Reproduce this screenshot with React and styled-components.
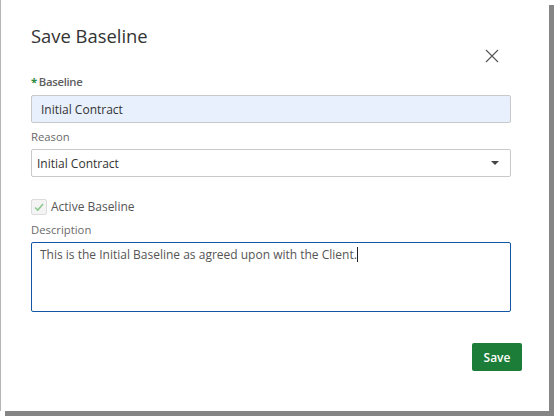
import React from 'react';
import styled, { createGlobalStyle } from 'styled-components';

const GlobalStyle = createGlobalStyle`
  html, body {
    margin: 0;
    padding: 0;
    background: #ffffff;
    font-family: "Open Sans", "Noto Sans", sans-serif;
  }
`;

const Page = styled.div`
  width: 554px;
  height: 416px;
  overflow: hidden;
`;

const Dialog = styled.div`
  box-sizing: border-box;
  width: 549px;
  height: 411px;
  background: #fff;
  border-left: 1px solid #b5b5b5;
  box-shadow: 5px 5px 0 #858585;
  padding: 22px 30px 0 30px;
  position: relative;
`;

const Title = styled.h2`
  margin: 0;
  font-size: 18.4px;
  font-weight: 400;
  color: #333;
  line-height: 28px;
`;

const CloseButton = styled.button`
  position: absolute;
  top: 48px;
  right: 49px;
  width: 16px;
  height: 16px;
  padding: 0;
  border: 0;
  background: none;
  cursor: pointer;
  display: flex;
`;

const Form = styled.div`
  margin-top: 24px;
  display: flex;
  flex-direction: column;
  width: 480px;
`;

const Label = styled.label`
  display: block;
  font-size: 11.3px;
  color: ${(p) => (p.$strong ? '#5e5e5e' : '#6a6a6a')};
  font-weight: ${(p) => (p.$strong ? 600 : 400)};
  line-height: 16px;
  margin-bottom: ${(p) => p.$gap || 5}px;
  letter-spacing: ${(p) => (p.$strong ? '-0.3px' : '0')};
`;

const Required = styled.span`
  color: #2b8a3e;
  font-weight: 700;
  margin-right: 2px;
`;

const Input = styled.div`
  box-sizing: border-box;
  height: 28px;
  border: 1px solid #c9c9c9;
  border-radius: 2px;
  background: ${(p) => p.$bg || '#fff'};
  font-size: 12px;
  color: #333;
  padding: 0 ${(p) => p.$pad || 8}px;
  display: flex;
  align-items: center;
  justify-content: space-between;
  margin-bottom: ${(p) => p.$mb || 0}px;
`;

const Caret = styled.span`
  width: 0;
  height: 0;
  border-left: 4px solid transparent;
  border-right: 4px solid transparent;
  border-top: 4px solid #444;
  margin-right: 6px;
`;

const CheckRow = styled.div`
  display: flex;
  align-items: center;
  gap: 4px;
  margin-top: 21px;
  margin-bottom: 7px;
  font-size: 12px;
  color: #555;
`;

const CheckBox = styled.span`
  box-sizing: border-box;
  width: 16px;
  height: 16px;
  border: 1px solid #dcdcdc;
  border-radius: 2px;
  background: #f4f4f4;
  display: flex;
  align-items: center;
  justify-content: center;
`;

const TextArea = styled.div`
  box-sizing: border-box;
  height: 70px;
  border: 1px solid #1257a6;
  border-radius: 2px;
  font-size: 12px;
  color: #555;
  padding: 3px 8px;
  line-height: 18px;
`;

const Cursor = styled.span`
  display: inline-block;
  width: 1px;
  height: 15px;
  background: #222;
  vertical-align: -3px;
`;

const Footer = styled.div`
  display: flex;
  justify-content: flex-end;
  margin-top: 31px;
  width: 491px;
`;

const SaveButton = styled.button`
  box-sizing: border-box;
  height: 28px;
  width: 50px;
  border: 0;
  border-radius: 2px;
  background: #1b7d37;
  color: #fff;
  font-family: inherit;
  font-size: 12px;
  font-weight: 600;
  cursor: pointer;
`;

export default function App() {
  return (
    <Page>
      <GlobalStyle />
      <Dialog>
        <Title>Save Baseline</Title>
        <CloseButton aria-label="Close">
          <svg width="16" height="16" viewBox="0 0 16 16">
            <path d="M2 2 L14 14 M14 2 L2 14" stroke="#555" strokeWidth="1.1" fill="none" />
          </svg>
        </CloseButton>
        <Form>
          <Label $strong $gap={5}>
            <Required>*</Required>Baseline
          </Label>
          <Input $bg="#e8f0fd" $pad={9} $mb={6}>Initial Contract</Input>
          <Label $gap={4}>Reason</Label>
          <Input $pad={5}>
            Initial Contract
            <Caret />
          </Input>
          <CheckRow>
            <CheckBox>
              <svg width="12" height="12" viewBox="0 0 12 12">
                <path d="M2 6.5 L4.8 9 L10 3" stroke="#8cc88c" strokeWidth="1.6" fill="none" />
              </svg>
            </CheckBox>
            Active Baseline
          </CheckRow>
          <Label $gap={4}>Description</Label>
          <TextArea>
            This is the Initial Baseline as agreed upon with the Client.<Cursor />
          </TextArea>
        </Form>
        <Footer>
          <SaveButton>Save</SaveButton>
        </Footer>
      </Dialog>
    </Page>
  );
}
